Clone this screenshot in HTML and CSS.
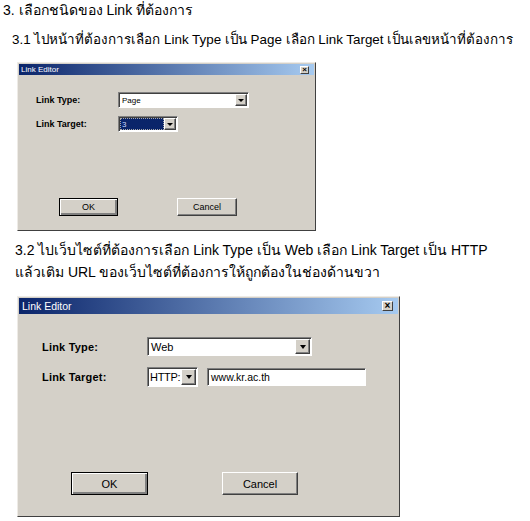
FILE: index.html
```html
<!DOCTYPE html>
<html lang="th">
<head>
    <meta charset="UTF-8">
    <title>Link Editor</title>
    <link rel="stylesheet" href="styles.css">
</head>
<body>
    <div class="doc">
        <p class="line step">3. เลือกชนิดของ Link ที่ต้องการ</p>
        <p class="line sub first">3.1 ไปหน้าที่ต้องการเลือก Link Type เป็น Page เลือก Link Target เป็นเลขหน้าที่ต้องการ</p>

        <div class="dialog small">
            <div class="titlebar">
                <span>Link Editor</span>
                <span class="close">×</span>
            </div>
            <div class="dlg-body">
                <div class="field-row">
                    <span class="label">Link Type:</span>
                    <div class="combo combo-type">
                        <span class="combo-text">Page</span>
                        <span class="combo-btn"><i class="arrow"></i></span>
                    </div>
                </div>
                <div class="field-row">
                    <span class="label">Link Target:</span>
                    <div class="combo combo-page">
                        <span class="combo-text selected">3</span>
                        <span class="combo-btn"><i class="arrow"></i></span>
                    </div>
                </div>
                <div class="buttons">
                    <span class="btn default">OK</span>
                    <span class="btn">Cancel</span>
                </div>
            </div>
        </div>

        <p class="line sub second">3.2 ไปเว็บไซต์ที่ต้องการเลือก Link Type เป็น Web เลือก Link Target เป็น HTTP</p>
        <p class="line sub third">แล้วเติม URL ของเว็บไซต์ที่ต้องการให้ถูกต้องในช่องด้านขวา</p>

        <div class="dialog large">
            <div class="titlebar">
                <span>Link Editor</span>
                <span class="close">×</span>
            </div>
            <div class="dlg-body">
                <div class="field-row">
                    <span class="label">Link Type:</span>
                    <div class="combo combo-type">
                        <span class="combo-text">Web</span>
                        <span class="combo-btn"><i class="arrow"></i></span>
                    </div>
                </div>
                <div class="field-row">
                    <span class="label">Link Target:</span>
                    <div class="combo combo-proto">
                        <span class="combo-text proto">HTTP:</span>
                        <span class="combo-btn"><i class="arrow"></i></span>
                    </div>
                    <div class="textbox">www.kr.ac.th</div>
                </div>
                <div class="buttons">
                    <span class="btn default">OK</span>
                    <span class="btn">Cancel</span>
                </div>
            </div>
        </div>
    </div>
</body>
</html>
```

FILE: styles.css
```css
* { margin: 0; padding: 0; box-sizing: border-box; }

body {
    font-family: Tahoma, "Liberation Sans", "DejaVu Sans", sans-serif;
    background: #ffffff;
    color: #000000;
    width: 530px;
    height: 521px;
    overflow: hidden;
}

/* document text */
.line {
    font-size: 14px;
    line-height: 20px;
    white-space: nowrap;
}

.step { padding-left: 3px; }

.sub { padding-left: 12px; }
.sub.first { margin-top: 10px; font-size: 13.4px; }
.sub.second { margin-top: 9px; padding-left: 15px; }
.sub.third { margin-top: 2px; padding-left: 15px; }

/* dialog window */
.dialog {
    display: flex;
    flex-direction: column;
    margin-left: 17px;
    padding: 1px;
    background: #d4d0c8;
    border: 1px solid;
    border-color: #eeebe6 #404040 #404040 #eeebe6;
    font-family: "Liberation Sans", Arial, sans-serif;
}

.dialog.small { width: 299px; height: 169px; margin-top: 12px; }
.dialog.large { width: 383px; height: 221px; margin-top: 14px; }

.titlebar {
    display: flex;
    align-items: center;
    justify-content: space-between;
    background: linear-gradient(to right, #0a246a, #a6caf0);
    color: #ffffff;
    white-space: nowrap;
}

.small .titlebar { height: 11px; font-size: 8px; padding: 0 5px 0 2px; }
.large .titlebar { height: 16px; font-size: 10.5px; padding: 0 5px 0 3px; }

.close {
    display: flex;
    align-items: center;
    justify-content: center;
    background: #d4d0c8;
    color: #000000;
    font-weight: bold;
    border: 1px solid;
    border-color: #ffffff #404040 #404040 #ffffff;
}

.small .close { width: 9px; height: 8px; font-size: 8px; line-height: 1; }
.large .close { width: 11px; height: 10px; font-size: 10px; line-height: 1; }

.dlg-body {
    flex: 1;
    display: flex;
    flex-direction: column;
}

.small .dlg-body { padding: 17px 0 13px 17px; gap: 8px; }
.large .dlg-body { padding: 23px 0 20px 23px; gap: 11px; }

.field-row {
    display: flex;
    align-items: center;
}

.label {
    font-weight: bold;
    white-space: nowrap;
}

.small .label { width: 82px; font-size: 9px; }
.large .label { width: 105px; font-size: 11px; letter-spacing: 0.2px; }

/* combo boxes */
.combo {
    display: flex;
    background: #ffffff;
    border: 1px solid;
    border-color: #808080 #ffffff #ffffff #808080;
    box-shadow: inset 1px 1px #404040;
    padding: 1px;
    overflow: hidden;
}

.combo-text {
    flex: 1;
    display: flex;
    align-items: center;
    white-space: nowrap;
    overflow: hidden;
    padding-left: 2px;
}

.combo-text.proto { letter-spacing: -0.3px; padding-left: 1px; }

.combo-text.selected {
    background: #0a246a;
    color: #c8d8ff;
    outline: 1px dotted #a8a8a8;
    outline-offset: -1px;
}

.combo-btn {
    display: flex;
    align-items: center;
    justify-content: center;
    background: #d4d0c8;
    border: 1px solid;
    border-color: #ffffff #404040 #404040 #ffffff;
    box-shadow: inset -1px -1px #808080;
}

.arrow {
    width: 0;
    height: 0;
    border-style: solid;
    border-color: #000000 transparent transparent transparent;
}

.small .combo { height: 16px; font-size: 8px; }
.small .combo-btn { width: 12px; }
.small .arrow { border-width: 3px 3px 0 3px; }
.small .combo-type { width: 131px; }
.small .combo-page { width: 60px; }

.large .combo { height: 19px; font-size: 11px; }
.large .combo-btn { width: 15px; }
.large .arrow { border-width: 4px 3.5px 0 3.5px; }
.large .combo-type { width: 165px; }
.large .combo-proto { width: 51px; height: 20px; }

.textbox {
    width: 159px;
    height: 18px;
    margin-left: 9px;
    background: #ffffff;
    border: 1px solid;
    border-color: #808080 #ffffff #ffffff #808080;
    box-shadow: inset 1px 1px #404040;
    font-size: 10.5px;
    padding: 2px 0 0 3px;
    white-space: nowrap;
}

/* buttons */
.buttons {
    display: flex;
    margin-top: auto;
}

.small .buttons { padding-left: 23px; gap: 59px; }
.large .buttons { padding-left: 29px; gap: 74px; }

.btn {
    display: flex;
    align-items: center;
    justify-content: center;
    background: #d4d0c8;
    border: 1px solid;
    border-color: #ffffff #404040 #404040 #ffffff;
    box-shadow: inset -1px -1px #808080;
    white-space: nowrap;
}

.btn.default {
    border-color: #000000;
    box-shadow: inset 1px 1px #ffffff, inset -2px -2px #808080;
}

.small .btn { width: 59px; height: 18px; font-size: 9px; }
.small .btn + .btn { width: 60px; }
.large .btn { width: 77px; height: 23px; font-size: 11px; }
.large .btn + .btn { width: 76px; }
```
